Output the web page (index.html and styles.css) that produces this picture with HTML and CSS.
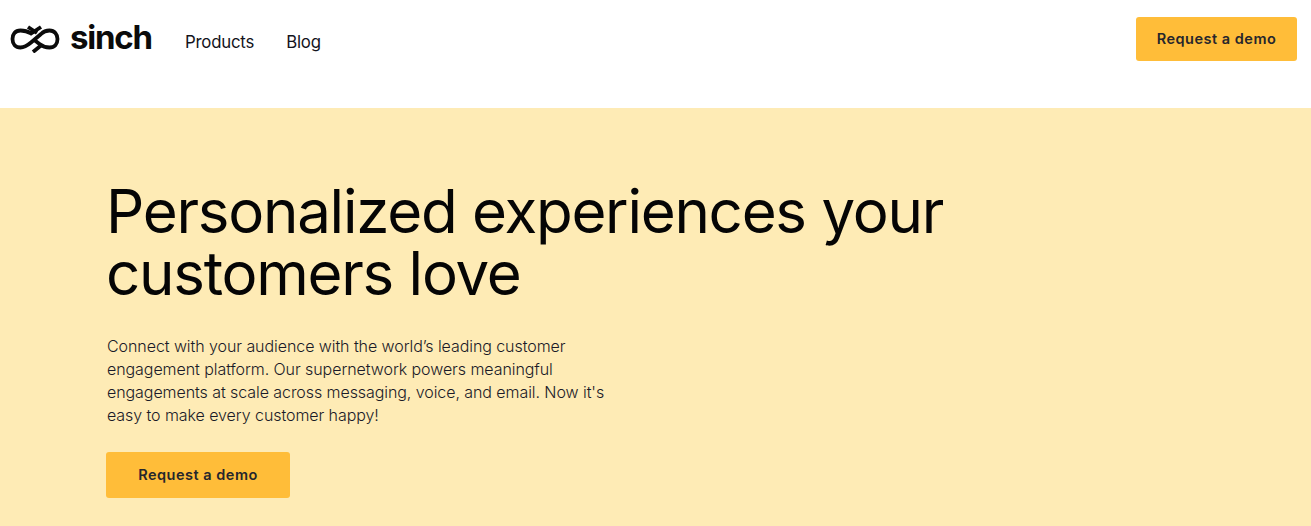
FILE: index.html
```html
<!DOCTYPE html>
<html lang="en">
<head>
<meta charset="utf-8">
<title>Sinch</title>
<link rel="stylesheet" href="styles.css">
</head>
<body>
<header class="topbar">
  <a class="logo" href="#">
    <svg class="logo-mark" viewBox="10 23 50 30" width="50" height="30" aria-hidden="true">
      <path d="M41 27 L31 33.500 C27 31 24 30.500 20.500 30.500 C15 30.500 12.500 34.500 12.500 39 C12.500 44 15.500 47.500 20.500 47.500 C25 47.500 28 45 31 42.500 L41 34 C43 32 46 30.500 49.500 30.500 C54.500 30.500 57.500 34.500 57.500 39 C57.500 44 54.500 47.500 49.500 47.500 C45 47.500 42 46 39.500 44 L33 39" fill="none" stroke="#0b0b0b" stroke-width="3.800"/>
      <path d="M28 27 L37 33 M33 52 L41 45.500" fill="none" stroke="#0b0b0b" stroke-width="3.800"/>
    </svg>
    <span class="logo-word">sinch</span>
  </a>
  <nav class="nav">
    <a href="#">Products</a>
    <a href="#">Blog</a>
  </nav>
  <a class="btn btn-top" href="#">Request a demo</a>
</header>
<main class="hero">
  <h1>Personalized experiences your customers love</h1>
  <p>Connect with your audience with the world’s leading customer engagement platform. Our supernetwork powers meaningful engagements at scale across messaging, voice, and email. Now it's easy to make every customer happy!</p>
  <a class="btn btn-hero" href="#">Request a demo</a>
</main>
</body>
</html>
```
FILE: styles.css
```css
* { box-sizing: border-box; }
html, body { margin: 0; height: 100%; overflow: hidden; }
body { background: #feebb5; font-family: "Inter", "Liberation Sans", sans-serif; color: #0f0f14; }
a { text-decoration: none; color: inherit; }
.topbar { height: 108px; background: #fff; display: flex; align-items: flex-start; padding: 17px 14px 0 10px; }
.logo { display: flex; align-items: center; height: 42px; gap: 10px; }
.logo-mark { display: block; }
.logo-word { font-family: "Inter", sans-serif; font-weight: 700; font-size: 33px; letter-spacing: -1.2px; color: #0b0b0b; line-height: 1; padding-bottom: 2px; }
.nav { display: flex; gap: 32px; margin-left: 33px; height: 50px; align-items: center; font-size: 16.800px; letter-spacing: -0.2px; color: #14141c; }
.btn { display: flex; align-items: center; justify-content: center; padding-bottom: 2px; background: #ffbd39; color: #26262c; font-weight: 600; font-size: 14.500px; letter-spacing: 0.5px; border-radius: 3px; }
.btn-top { margin-left: auto; width: 161px; height: 44px; }
.hero { padding: 72px 0 0 106px; }
h1 { margin: 0; width: 900px; font-weight: 370; font-size: 60px; line-height: 62px; letter-spacing: -1.25px; color: #050505; }
p { margin: 31px 0 0 1px; width: 510px; font-size: 16px; font-weight: 350; line-height: 23px; letter-spacing: -0.07px; color: #1a1a28; }
.btn-hero { margin-top: 25px; width: 184px; height: 46px; }
```
